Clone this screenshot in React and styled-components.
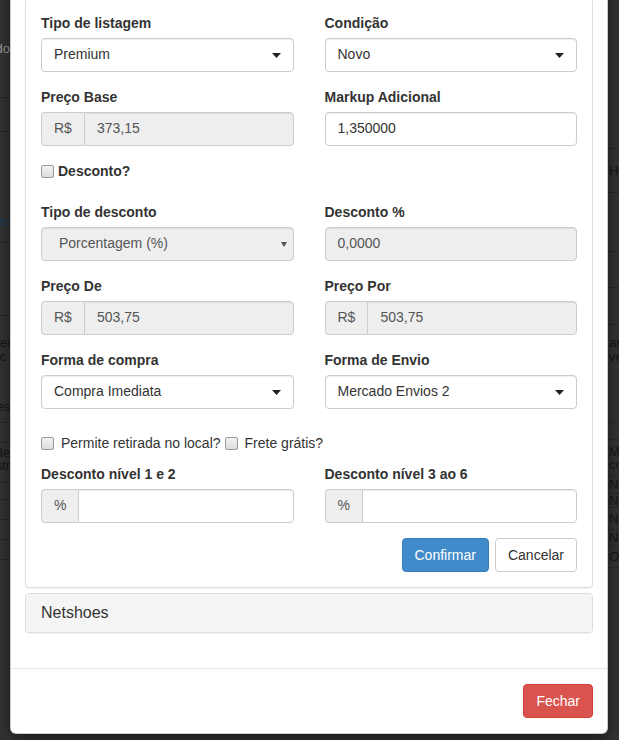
import React from 'react';
import styled, { createGlobalStyle } from 'styled-components';

const Global = createGlobalStyle`
  html, body { margin: 0; padding: 0; background: #333; overflow: hidden; }
  body {
    font-family: "Liberation Sans", Arial, Helvetica, sans-serif;
    font-size: 14px;
    line-height: 1.42857;
    color: #333;
  }
  * { box-sizing: border-box; }
`;

const Screen = styled.div`
  position: relative;
  width: 619px;
  height: 740px;
  overflow: hidden;
  background: #333;
`;

/* ---------- dimmed page behind the modal ---------- */
const BgPage = styled.div`
  display: grid;
  grid-template-columns: 10px 1fr 11px;
  height: 740px;
  font-size: 13px;
`;

const BgColumn = styled.div`
  display: flex;
  flex-direction: column;
  overflow: hidden;
`;

const BgRow = styled.div`
  flex: none;
  height: ${p => p.$h}px;
  padding-top: ${p => p.$pt || 0}px;
  border-bottom: ${p => (p.$border === 'none' ? '0' : `1px ${p.$border || 'solid'} #272727`)};
  display: flex;
  justify-content: ${p => (p.$side === 'left' ? 'flex-end' : 'flex-start')};
  overflow: hidden;
  color: ${p => p.$color || '#161616'};
  line-height: ${p => p.$lh || 20}px;
  white-space: pre;
`;

const BgText = styled.div`
  flex: none;
  text-align: ${p => (p.$side === 'left' ? 'right' : 'left')};
  padding-left: ${p => (p.$side === 'left' ? 0 : 1)}px;
`;

const leftRows = [
  { h: 98, pt: 39, lines: ['Pedido'], color: '#9c9c9c' },
  { h: 34 },
  { h: 78, border: 'none' },
  { h: 33, pt: 2, lines: ['Produto'], color: '#1e3a5a' },
  { h: 73 },
  { h: 76, pt: 20, lh: 14, lines: ['Aproveitei', 'na loja c '], border: 'none' },
  { h: 31, pt: 5, lines: ['Informações'], border: 'dashed' },
  { h: 20, border: 'dashed' },
  { h: 40, pt: 3, lh: 13, lines: ['Pode', 'demonstr'], border: 'dashed' },
  { h: 17, border: 'dashed' },
  { h: 20, border: 'dashed' },
  { h: 20, border: 'dashed' },
  { h: 20, border: 'dashed' },
  { h: 180, border: 'none' },
];

const rightRows = [
  { h: 149 },
  { h: 44, pt: 12, lines: ['Histórico'] },
  { h: 59 },
  { h: 36 },
  { h: 37 },
  { h: 98, pt: 11, lh: 14, lines: ['ar', 've'], border: 'dashed' },
  { h: 17, border: 'dashed' },
  { h: 36, pt: 5, lh: 13, lines: ['Me', 'co'], border: 'dashed' },
  { h: 18, lh: 18, lines: ['Não'], border: 'dashed' },
  { h: 14, lh: 14, lines: ['Não'], border: 'dashed' },
  { h: 22, lh: 22, lines: ['Não'], border: 'dashed' },
  { h: 16, lh: 16, lines: ['Não'], border: 'dashed' },
  { h: 22, lh: 22, lines: ['Ok'], border: 'dashed' },
  { h: 172, border: 'none' },
];

function Background() {
  const render = (rows, side) =>
    rows.map((r, i) => (
      <BgRow key={i} $side={side} $h={r.h} $pt={r.pt} $lh={r.lh} $border={r.border} $color={r.color}>
        {r.lines && <BgText $side={side}>{r.lines.join('\n')}</BgText>}
      </BgRow>
    ));
  return (
    <BgPage>
      <BgColumn>{render(leftRows, 'left')}</BgColumn>
      <div />
      <BgColumn>{render(rightRows, 'right')}</BgColumn>
    </BgPage>
  );
}

/* ---------- modal ---------- */
const Modal = styled.div`
  position: absolute;
  left: 10px;
  top: -19px;
  width: 598px;
  background: #fff;
  border: 1px solid rgba(0, 0, 0, 0.2);
  border-radius: 6px;
  box-shadow: 0 5px 15px rgba(0, 0, 0, 0.5);
`;

const ModalBody = styled.div`
  padding: 15px 14px;
`;

const PanelGroup = styled.div`
  display: flex;
  flex-direction: column;
  gap: 5px;
  margin-bottom: 20px;
`;

const Panel = styled.div`
  border: 1px solid #ddd;
  border-radius: 4px;
  background: #fff;
  box-shadow: 0 1px 1px rgba(0, 0, 0, 0.05);
  overflow: hidden;
`;

const PanelHeading = styled.div`
  background: #f5f5f5;
  padding: 10px 15px;
  font-size: 16px;
  line-height: 18px;
  color: #333;
`;

const PanelBody = styled.div`
  padding: 15px;
`;

const FormRow = styled.div`
  display: grid;
  grid-template-columns: 1fr 1fr;
  column-gap: 31px;
`;

const FormGroup = styled.div`
  margin-bottom: 15px;
`;

const Label = styled.label`
  display: block;
  font-weight: bold;
  line-height: 20px;
  margin-bottom: 5px;
`;

const Control = styled.div`
  display: flex;
  align-items: center;
  height: 34px;
  padding: 6px ${p => (p.$indent ? 6 : 12)}px 6px ${p => (p.$indent ? 17 : 12)}px;
  border: 1px solid #ccc;
  border-radius: ${p => (p.$grouped ? '0 4px 4px 0' : '4px')};
  background: ${p => (p.$disabled ? '#eee' : '#fff')};
  color: ${p => (p.$disabled ? '#555' : '#333')};
  box-shadow: inset 0 1px 1px rgba(0, 0, 0, 0.075);
  flex: 1;
  min-width: 0;
  white-space: nowrap;
`;

const ControlText = styled.span`
  flex: 1;
`;

const InputGroup = styled.div`
  display: flex;
`;

const Addon = styled.span`
  display: flex;
  align-items: center;
  height: 34px;
  padding: 6px 12px;
  background: #eee;
  color: #555;
  border: 1px solid #ccc;
  border-right: 0;
  border-radius: 4px 0 0 4px;
`;

const Caret = ({ disabled }) =>
  disabled ? (
    <svg width="6" height="6" viewBox="0 0 6 6">
      <path d="M0 1 L6 1 L3 6 Z" fill="#555" />
    </svg>
  ) : (
    <svg width="9" height="5" viewBox="0 0 9 5">
      <path d="M0 0 L9 0 L4.5 5 Z" fill="#222" />
    </svg>
  );

function Select({ value, disabled }) {
  return (
    <Control $disabled={disabled} $indent={disabled}>
      <ControlText>{value}</ControlText>
      <Caret disabled={disabled} />
    </Control>
  );
}

function Field({ label, children }) {
  return (
    <FormGroup>
      <Label>{label}</Label>
      {children}
    </FormGroup>
  );
}

const CheckRow = styled.div`
  display: flex;
  align-items: center;
  height: 20px;
  margin: ${p => p.$margin};
  font-weight: ${p => (p.$bold ? 'bold' : 'normal')};
`;

const CheckLabel = styled.label`
  display: inline-flex;
  align-items: center;
  gap: ${p => p.$gap}px;
  margin-right: 4px;
`;

const Box = styled.span`
  display: inline-block;
  width: 13px;
  height: 13px;
  border: 1px solid #9a9a9a;
  border-radius: 2px;
  background: linear-gradient(#f3f3f3, #dcdcdc);
`;

const Actions = styled.div`
  display: flex;
  justify-content: flex-end;
  gap: 6px;
`;

const variants = {
  primary: { bg: '#428bca', border: '#357ebd', color: '#fff' },
  default: { bg: '#fff', border: '#ccc', color: '#333' },
  danger: { bg: '#d9534f', border: '#d43f3a', color: '#fff' },
};

const Button = styled.button`
  font-family: inherit;
  font-size: 14px;
  line-height: 20px;
  height: 34px;
  padding: 6px 12px;
  border-radius: 4px;
  border: 1px solid ${p => variants[p.$variant].border};
  background: ${p => variants[p.$variant].bg};
  color: ${p => variants[p.$variant].color};
  cursor: pointer;
`;

const ModalFooter = styled.div`
  display: flex;
  justify-content: flex-end;
  padding: 15px 14px;
  border-top: 1px solid #e5e5e5;
`;

export default function App() {
  return (
    <Screen>
      <Global />
      <Background />
      <Modal>
        <ModalBody>
          <PanelGroup>
            <Panel>
              <PanelBody>
                <FormRow>
                  <Field label="Tipo de listagem">
                    <Select value="Premium" />
                  </Field>
                  <Field label="Condição">
                    <Select value="Novo" />
                  </Field>
                </FormRow>
                <FormRow>
                  <Field label="Preço Base">
                    <InputGroup>
                      <Addon>R$</Addon>
                      <Control $disabled $grouped>373,15</Control>
                    </InputGroup>
                  </Field>
                  <Field label="Markup Adicional">
                    <Control>1,350000</Control>
                  </Field>
                </FormRow>
                <CheckRow $bold $margin="1px 0 20px">
                  <CheckLabel $gap={4}>
                    <Box />
                    Desconto?
                  </CheckLabel>
                </CheckRow>
                <FormRow>
                  <Field label="Tipo de desconto">
                    <Select value="Porcentagem (%)" disabled />
                  </Field>
                  <Field label="Desconto %">
                    <Control $disabled>0,0000</Control>
                  </Field>
                </FormRow>
                <FormRow>
                  <Field label="Preço De">
                    <InputGroup>
                      <Addon>R$</Addon>
                      <Control $disabled $grouped>503,75</Control>
                    </InputGroup>
                  </Field>
                  <Field label="Preço Por">
                    <InputGroup>
                      <Addon>R$</Addon>
                      <Control $disabled $grouped>503,75</Control>
                    </InputGroup>
                  </Field>
                </FormRow>
                <FormRow>
                  <Field label="Forma de compra">
                    <Select value="Compra Imediata" />
                  </Field>
                  <Field label="Forma de Envio">
                    <Select value="Mercado Envios 2" />
                  </Field>
                </FormRow>
                <CheckRow $margin="10px 0 10px">
                  <CheckLabel $gap={7}>
                    <Box />
                    Permite retirada no local?
                  </CheckLabel>
                  <CheckLabel $gap={7}>
                    <Box />
                    Frete grátis?
                  </CheckLabel>
                </CheckRow>
                <FormRow>
                  <Field label="Desconto nível 1 e 2">
                    <InputGroup>
                      <Addon>%</Addon>
                      <Control $grouped />
                    </InputGroup>
                  </Field>
                  <Field label="Desconto nível 3 ao 6">
                    <InputGroup>
                      <Addon>%</Addon>
                      <Control $grouped />
                    </InputGroup>
                  </Field>
                </FormRow>
                <Actions>
                  <Button $variant="primary">Confirmar</Button>
                  <Button $variant="default">Cancelar</Button>
                </Actions>
              </PanelBody>
            </Panel>
            <Panel>
              <PanelHeading>Netshoes</PanelHeading>
            </Panel>
          </PanelGroup>
        </ModalBody>
        <ModalFooter>
          <Button $variant="danger">Fechar</Button>
        </ModalFooter>
      </Modal>
    </Screen>
  );
}
